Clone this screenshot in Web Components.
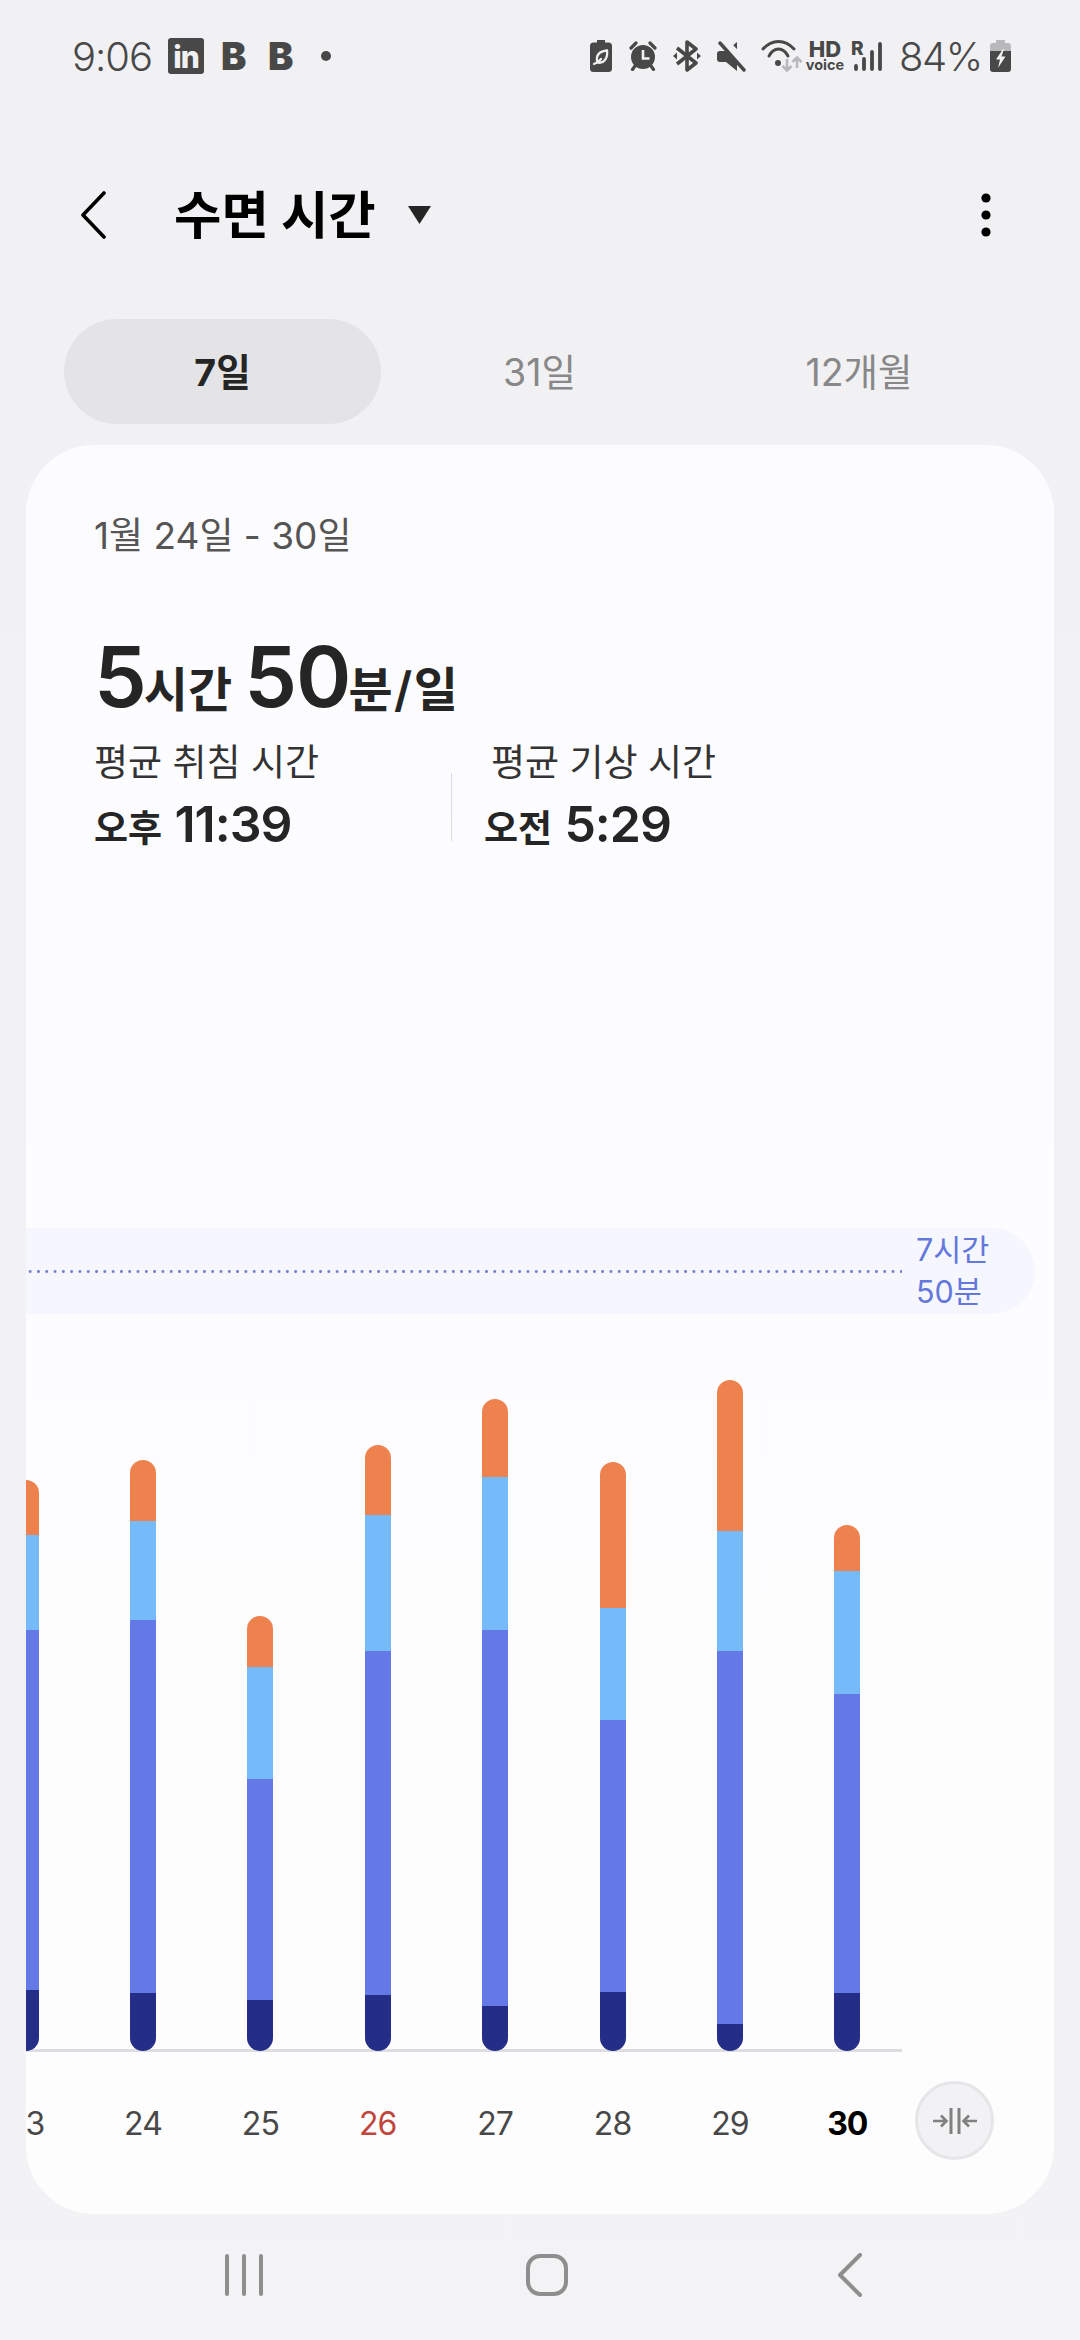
<!DOCTYPE html>
<html lang="ko">
<head>
<meta charset="utf-8">
<title>수면 시간</title>
<style>
  html, body { margin: 0; padding: 0; }
  body {
    width: 1080px;
    height: 2340px;
    overflow: hidden;
    display: flex;
    flex-direction: column;
    background: linear-gradient(#f1f1f4, #f3f3f5);
    font-family: Inter, "Noto Sans CJK KR", sans-serif;
  }
</style>
</head>
<body>
  <status-bar></status-bar>
  <app-header title="수면 시간"></app-header>
  <period-tabs>
    <period-tab selected>7일</period-tab>
    <period-tab>31일</period-tab>
    <period-tab style="padding-left:5px">12개월</period-tab>
  </period-tabs>
  <sleep-card>
    <sleep-summary></sleep-summary>
    <sleep-chart goal="7시간|50분">
      <sleep-bar slot="bars" segments="55,95,360,61"></sleep-bar>
      <sleep-bar slot="bars" segments="61,99,373,58"></sleep-bar>
      <sleep-bar slot="bars" segments="51,112,221,51"></sleep-bar>
      <sleep-bar slot="bars" segments="70,136,344,56"></sleep-bar>
      <sleep-bar slot="bars" segments="78,153,376,45"></sleep-bar>
      <sleep-bar slot="bars" segments="146,112,272,59"></sleep-bar>
      <sleep-bar slot="bars" segments="151,120,373,27"></sleep-bar>
      <sleep-bar slot="bars" segments="46,123,299,58"></sleep-bar>
      <day-label slot="labels">23</day-label>
      <day-label slot="labels">24</day-label>
      <day-label slot="labels">25</day-label>
      <day-label slot="labels" tone="sunday">26</day-label>
      <day-label slot="labels">27</day-label>
      <day-label slot="labels">28</day-label>
      <day-label slot="labels">29</day-label>
      <day-label slot="labels" tone="today">30</day-label>
    </sleep-chart>
  </sleep-card>
  <nav-bar></nav-bar>

<script>
class StatusBar extends HTMLElement {
  constructor() {
    super();
    this.attachShadow({ mode: "open" });
  }

  connectedCallback() {
    this.shadowRoot.innerHTML = /* html */ `
      <style>
        :host {
          display: flex;
          flex: none;
          height: 114px;
          align-items: center;
          padding: 0 69px 2px 72px;
          box-sizing: border-box;
          color: #484848;
        }
        svg { display: block; flex: none; }
        .time { font-size: 40px; font-weight: 300; letter-spacing: -1px; width: 96px; flex: none; }
        .in {
          width: 36px; height: 36px; flex: none; box-sizing: border-box;
          background: #484848; color: #f1f1f4; border-radius: 3px;
          font-size: 30px; font-weight: 800; line-height: 38px; text-align: center; letter-spacing: -1px;
        }
        .b { font-size: 38px; font-weight: 900; line-height: 36px; width: 24px; flex: none; }
        .dot { width: 10px; height: 10px; border-radius: 50%; background: #484848; margin-left: 29px; flex: none; }
        .spacer { flex: 1; }
        .hd { width: 34px; flex: none; display: flex; flex-direction: column; align-items: center; margin-left: 5px; }
        .hd b { font-size: 22px; font-weight: 800; line-height: 18px; }
        .hd i { font-style: normal; font-size: 14.5px; font-weight: 700; line-height: 14px; }
        .signal { display: grid; flex: none; width: 31px; height: 31px; margin-left: 9px; }
        .signal > * { grid-area: 1 / 1; }
        .signal span { font-size: 19px; font-weight: 800; line-height: 15px; height: 15px; }
        .pct { width: 80px; flex: none; font-size: 40px; font-weight: 300; letter-spacing: -1.4px; margin-left: 17px; white-space: nowrap; }
      </style>
      <span class="time">9:06</span>
      <span class="in">in</span>
      <span class="b" style="margin-left:17px">B</span>
      <span class="b" style="margin-left:23px">B</span>
      <span class="dot"></span>
      <span class="spacer"></span>

      <svg width="22" height="32" viewBox="0 0 22 32">
        <path fill="#484848" d="M7 0h8v2.5h3.5A3.5 3.5 0 0 1 22 6v22.500a3.500 3.500 0 0 1-3.500 3.500h-15A3.500 3.500 0 0 1 0 28.500V6a3.500 3.500 0 0 1 3.500-3.500H7z"/>
        <path fill="none" stroke="#f1f1f4" stroke-width="2.300" stroke-linecap="round" d="M4 24c3-1 5-2.500 7-5M7.500 22.500C5 15 10 11 17 10.500c1 7-2.500 13.500-9.500 12z"/>
      </svg>

      <svg style="margin-left:17px" width="28" height="30" viewBox="0 0 28 30">
        <circle cx="14" cy="16" r="12" fill="#484848"/>
        <path fill="none" stroke="#484848" stroke-width="3.200" stroke-linecap="round" d="M2 7l5-5M26 7l-5-5M6 25l-2.500 3.500M22 25l2.500 3.500"/>
        <path fill="none" stroke="#f1f1f4" stroke-width="2.600" d="M14 9v8.500h6.500"/>
      </svg>

      <svg style="margin-left:16px" width="28" height="32" viewBox="0 0 28 32">
        <path fill="none" stroke="#484848" stroke-width="3.600" stroke-linejoin="round" d="M4 8l19 15-9 7V2l9 7L4 24"/>
        <path fill="#484848" d="M0 16l4-3.500v7zM28 16l-4-3.500v7z"/>
      </svg>

      <svg style="margin-left:16px" width="29" height="31" viewBox="0 0 29 31">
        <path fill="#484848" d="M3 10h6l11-9v29l-11-9H3a3 3 0 0 1-3-3v-5a3 3 0 0 1 3-3z"/>
        <path fill="none" stroke="#f1f1f4" stroke-width="8" d="M7 0l22 24"/>
        <path fill="none" stroke="#484848" stroke-width="3.400" stroke-linecap="round" d="M3 2l24 27"/>
      </svg>

      <svg style="margin-left:15px" width="42" height="33" viewBox="0 0 42 33">
        <g fill="none" stroke="#484848" stroke-width="3" stroke-linecap="round">
          <path d="M2 9C11-1 24-1 33 9"/>
          <path d="M8 16C13 6.700 22 6.700 27 16"/>
        </g>
        <circle cx="17" cy="23" r="3" fill="#484848"/>
        <path fill="none" stroke="#b8b8ba" stroke-width="2.600" d="M26 19v11M21.500 26l4.500 4.500 4.500-4.500M36 28V18M31.500 22l4.500-4.500 4.500 4.500"/>
      </svg>

      <span class="hd"><b>HD</b><i>voice</i></span>

      <span class="signal">
        <span>R</span>
        <svg width="31" height="31" viewBox="0 0 31 31">
          <path fill="none" stroke="#484848" stroke-width="3.800" stroke-linecap="round" d="M5 25v3M13 18v10M21 11v17M29 3v25"/>
        </svg>
      </span>

      <span class="pct">84%</span>

      <svg style="margin-left:11px" width="21" height="32" viewBox="0 0 21 32">
        <path fill="#b9b9bb" d="M6 0h9v3h3a3 3 0 0 1 3 3v6H0V6a3 3 0 0 1 3-3h3z"/>
        <path fill="#484848" d="M0 11h21v18a3 3 0 0 1-3 3H3a3 3 0 0 1-3-3z"/>
        <path fill="#f1f1f4" d="M13 9L6 19.500h4L8 28l7.500-11.500h-4L14 9z"/>
      </svg>
    `;
  }
}

class AppHeader extends HTMLElement {
  constructor() {
    super();
    this.attachShadow({ mode: "open" });
  }

  connectedCallback() {
    this.shadowRoot.innerHTML = /* html */ `
      <style>
        :host {
          display: flex;
          flex: none;
          height: 202px;
          align-items: center;
          padding: 0 89px 0 80px;
          color: #000;
        }
        h1 { margin: 0 0 0 68px; font-size: 51.500px; font-weight: 700; line-height: 60px; white-space: nowrap; }
        .caret { margin-left: 32px; }
        .more { margin-left: auto; }
        svg { display: block; flex: none; }
      </style>
      <svg width="26" height="48" viewBox="0 0 26 48">
        <path fill="none" stroke="#000" stroke-width="3.600" stroke-linecap="round" stroke-linejoin="round" d="M24 2L3 24l21 22"/>
      </svg>
      <h1>${this.getAttribute("title")}</h1>
      <svg class="caret" width="23" height="18" viewBox="0 0 23 18"><path fill="#252525" d="M0 0h23L11.500 18z"/></svg>
      <svg class="more" width="10" height="44" viewBox="0 0 10 44">
        <circle cx="5" cy="5" r="4.600"/><circle cx="5" cy="22" r="4.600"/><circle cx="5" cy="39" r="4.600"/>
      </svg>
    `;
  }
}

class PeriodTabs extends HTMLElement {
  constructor() {
    super();
    this.attachShadow({ mode: "open" });
    this.shadowRoot.innerHTML = /* html */ `
      <style>
        :host {
          display: grid;
          flex: none;
          grid-template-columns: repeat(3, 317px);
          padding: 3px 0 0 64px;
        }
      </style>
      <slot></slot>
    `;
  }
}

class PeriodTab extends HTMLElement {
  constructor() {
    super();
    this.attachShadow({ mode: "open" });
    this.shadowRoot.innerHTML = /* html */ `
      <style>
        :host {
          display: flex;
          height: 105px;
          box-sizing: border-box;
          padding-bottom: 4px;
          align-items: center;
          justify-content: center;
          border-radius: 53px;
          font-size: 37.5px;
          color: #888;
        }
        :host([selected]) { background: #e4e4e6; color: #252525; font-weight: 700; }
      </style>
      <slot></slot>
    `;
  }
}

class SleepCard extends HTMLElement {
  constructor() {
    super();
    this.attachShadow({ mode: "open" });
    this.shadowRoot.innerHTML = /* html */ `
      <style>
        :host {
          display: flex;
          flex-direction: column;
          flex: none;
          height: 1769px;
          margin: 21px 26px 0;
          border-radius: 68px;
          background: linear-gradient(#fcfcff, #fdfdfe);
          overflow: hidden;
        }
      </style>
      <slot></slot>
    `;
  }
}

class SleepSummary extends HTMLElement {
  constructor() {
    super();
    this.attachShadow({ mode: "open" });
    this.shadowRoot.innerHTML = /* html */ `
      <style>
        :host { display: block; padding: 66px 0 0 68px; color: #252525; }
        .date { font-size: 37px; line-height: 50px; color: #555; }
        .total { margin-top: 64px; height: 104px; line-height: 104px; white-space: nowrap; font-weight: 600; }
        .total b { font-size: 84px; font-weight: 600; letter-spacing: -1px; }
        .total span { font-size: 48px; font-weight: 600; }
        .total b + span { margin-left: -2px; }
        .total span + b { margin-left: 8px; }
        .total .per { letter-spacing: 1.5px; }
        .stats { display: flex; margin-top: 12px; }
        .stat { width: 357px; flex: none; }
        .rule { width: 1px; height: 68px; background: #dcdce0; margin-top: 32px; flex: none; }
        .stat + .rule + .stat { margin-left: 32px; }
        .stat + .rule + .stat .label { padding-left: 7px; }
        .label { font-size: 37px; line-height: 44px; color: #333; }
        .value { margin-top: 11px; line-height: 56px; font-size: 37px; font-weight: 600; white-space: nowrap; }
        .value b { font-size: 50px; font-weight: 600; margin-left: 3px; letter-spacing: -1px; }
      </style>
      <div class="date">1월 24일 - 30일</div>
      <div class="total"><b>5</b><span>시간</span> <b>50</b><span class="per">분/일</span></div>
      <div class="stats">
        <div class="stat">
          <div class="label">평균 취침 시간</div>
          <div class="value">오후 <b>11:39</b></div>
        </div>
        <div class="rule"></div>
        <div class="stat">
          <div class="label">평균 기상 시간</div>
          <div class="value">오전 <b>5:29</b></div>
        </div>
      </div>
    `;
  }
}

class SleepChart extends HTMLElement {
  constructor() {
    super();
    this.attachShadow({ mode: "open" });
  }

  connectedCallback() {
    const goal = (this.getAttribute("goal") || "").split("|");
    this.shadowRoot.innerHTML = /* html */ `
      <style>
        :host { display: block; margin-top: auto; padding-bottom: 54px; }
        .goal {
          display: flex;
          align-items: center;
          height: 86px;
          margin-right: 19px;
          border-radius: 0 43px 43px 0;
          background: #f6f7fe;
        }
        .dots {
          width: 876px;
          flex: none;
          height: 3px;
          background: radial-gradient(circle, #6f7cc8 1.200px, transparent 1.600px) 0 0 / 8.300px 3px repeat-x;
        }
        .goal-text { margin-left: 14px; font-size: 30.500px; line-height: 42px; color: #6478db; white-space: nowrap; }
        .plot {
          position: relative;
          z-index: 1;
          display: flex;
          justify-content: flex-end;
          width: 880px;
          height: 671px;
          margin-top: 66px;
          overflow: hidden;
        }
        .axis { width: 876px; height: 3px; margin-top: -2px; background: #dedee2; }
        .foot { display: flex; align-items: flex-start; height: 108px; box-sizing: border-box; padding-top: 29px; }
        .labels { display: flex; justify-content: flex-end; width: 880px; flex: none; overflow: hidden; }
        .fit {
          display: flex;
          align-items: center;
          justify-content: center;
          flex: none;
          width: 79px;
          height: 79px;
          box-sizing: border-box;
          margin-left: 9px;
          border: 3px solid #e6e6e8;
          border-radius: 50%;
          background: #f2f2f4;
        }
      </style>
      <div class="goal">
        <div class="dots"></div>
        <div class="goal-text">${goal.join("<br>")}</div>
      </div>
      <div class="plot"><slot name="bars"></slot></div>
      <div class="axis"></div>
      <div class="foot">
        <div class="labels"><slot name="labels"></slot></div>
        <div class="fit">
          <svg width="44" height="28" viewBox="0 0 44 28">
            <g fill="none" stroke="#808080" stroke-width="3">
              <path d="M18 1v26M26 1v26"/>
              <path stroke-width="2.600" d="M0 14h13M8 8.500l5.500 5.500L8 19.500M44 14H31M36 8.500L30.500 14l5.500 5.500"/>
            </g>
          </svg>
        </div>
      </div>
    `;
  }
}

class SleepBar extends HTMLElement {
  constructor() {
    super();
    this.attachShadow({ mode: "open" });
  }

  connectedCallback() {
    const [awake, rem, light, deep] = this.getAttribute("segments").split(",");
    this.shadowRoot.innerHTML = /* html */ `
      <style>
        :host {
          display: flex;
          flex: none;
          width: 117.400px;
          align-items: flex-end;
          justify-content: center;
        }
        .bar { width: 26px; border-radius: 13px; overflow: hidden; }
      </style>
      <div class="bar">
        <div style="height:${awake}px;background:#ee824e"></div>
        <div style="height:${rem}px;background:#75baf9"></div>
        <div style="height:${light}px;background:#6478e6"></div>
        <div style="height:${deep}px;background:#242e87"></div>
      </div>
    `;
  }
}

class DayLabel extends HTMLElement {
  constructor() {
    super();
    this.attachShadow({ mode: "open" });
    this.shadowRoot.innerHTML = /* html */ `
      <style>
        :host {
          display: block;
          flex: none;
          width: 117.400px;
          text-align: center;
          font-size: 32px;
          line-height: 86px;
          letter-spacing: -1px;
          color: #484848;
        }
        :host([tone="sunday"]) { color: #c0453c; }
        :host([tone="today"]) { color: #000; font-weight: 700; }
      </style>
      <slot></slot>
    `;
  }
}

class NavBar extends HTMLElement {
  constructor() {
    super();
    this.attachShadow({ mode: "open" });
    this.shadowRoot.innerHTML = /* html */ `
      <style>
        :host {
          display: grid;
          flex: 1;
          grid-template-columns: repeat(3, 303px);
          justify-content: center;
          justify-items: center;
          align-items: center;
          padding: 0 0 4px 14px;
          box-sizing: border-box;
        }
        svg { display: block; }
      </style>
      <svg width="40" height="42" viewBox="0 0 40 42">
        <path fill="none" stroke="#8e8e8e" stroke-width="4" stroke-linecap="round" d="M3 2v38M20 2v38M37 2v38"/>
      </svg>
      <svg width="42" height="42" viewBox="0 0 42 42">
        <rect x="2" y="2" width="38" height="38" rx="12" fill="none" stroke="#8e8e8e" stroke-width="4"/>
      </svg>
      <svg width="26" height="44" viewBox="0 0 26 44">
        <path fill="none" stroke="#8e8e8e" stroke-width="4" stroke-linecap="round" stroke-linejoin="round" d="M23 2L3 22l20 20"/>
      </svg>
    `;
  }
}

customElements.define("status-bar", StatusBar);
customElements.define("app-header", AppHeader);
customElements.define("period-tabs", PeriodTabs);
customElements.define("period-tab", PeriodTab);
customElements.define("sleep-card", SleepCard);
customElements.define("sleep-summary", SleepSummary);
customElements.define("sleep-chart", SleepChart);
customElements.define("sleep-bar", SleepBar);
customElements.define("day-label", DayLabel);
customElements.define("nav-bar", NavBar);
</script>
</body>
</html>
